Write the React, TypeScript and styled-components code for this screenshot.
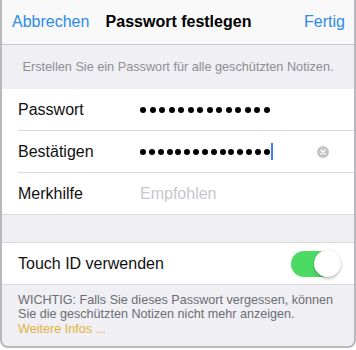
import React from "react";
import styled, { createGlobalStyle } from "styled-components";

const Global = createGlobalStyle`
  html, body { margin: 0; padding: 0; background: #ffffff; }
  body { font-family: "Liberation Sans", Arial, sans-serif; -webkit-font-smoothing: antialiased; }
`;

const Frame = styled.div`
  width: 356px;
  height: 348px;
  box-sizing: border-box;
  border: 2px solid #b9b9bd;
  border-top: none;
  border-radius: 0 0 8px 8px;
  background: #efeff4;
  overflow: hidden;
  display: flex;
  flex-direction: column;
`;

const NavBar = styled.div`
  flex: none;
  height: 44px;
  background: #f9f9f9;
  border-bottom: 1px solid #c8c7cc;
  display: grid;
  grid-template-columns: 1fr auto 1fr;
  align-items: center;
  padding: 0 9px 0 10px;
`;

const NavButton = styled.span<{ $align: "left" | "right" }>`
  color: #2b8be9;
  font-size: 16px;
  text-align: ${(p) => p.$align};
`;

const NavTitle = styled.span`
  color: #000;
  font-size: 16px;
  font-weight: 700;
`;

const SectionHeader = styled.div`
  flex: none;
  height: 44px;
  display: flex;
  align-items: center;
  justify-content: center;
  color: #8e8e93;
  font-size: 12.7px;
  white-space: nowrap;
`;

const Group = styled.div<{ $top?: boolean }>`
  flex: none;
  background: #fff;
  border-bottom: 1px solid #d9d9dd;
  border-top: ${(p) => (p.$top ? "1px solid #d9d9dd" : "none")};
`;

const Row = styled.div`
  display: flex;
  padding-left: 16px;
`;

const RowBody = styled.div<{ $sep?: boolean; $pr?: number }>`
  flex: 1;
  height: 41px;
  display: flex;
  align-items: center;
  border-top: ${(p) => (p.$sep ? "1px solid #d9d9dd" : "none")};
  padding-right: ${(p) => p.$pr ?? 0}px;
`;

const Label = styled.span<{ $w?: number }>`
  width: ${(p) => (p.$w ? `${p.$w}px` : "auto")};
  flex: ${(p) => (p.$w ? "none" : "1")};
  color: #111;
  font-size: 16px;
`;

const Field = styled.div`
  flex: 1;
  display: flex;
  align-items: center;
`;

const Dots = styled.div<{ $gap: number }>`
  display: flex;
  align-items: center;
  gap: ${(p) => p.$gap}px;
`;

const Dot = styled.span`
  width: 6px;
  height: 6px;
  border-radius: 50%;
  background: #000;
`;

const Caret = styled.span`
  width: 2px;
  height: 17px;
  margin-left: 1px;
  background: #3e7ef2;
`;

const Placeholder = styled.span`
  color: #c7c7cd;
  font-size: 16px;
`;

const ClearButton = styled.span`
  width: 12px;
  height: 12px;
  border-radius: 50%;
  background: #c4c4c9;
  display: flex;
  align-items: center;
  justify-content: center;
`;

const Gap = styled.div`
  flex: none;
  height: 27px;
`;

const Toggle = styled.span<{ $on: boolean }>`
  width: 49px;
  height: 26px;
  border-radius: 13px;
  background: ${(p) => (p.$on ? "#4cd964" : "#e5e5ea")};
  display: flex;
  justify-content: ${(p) => (p.$on ? "flex-end" : "flex-start")};
  align-items: center;
`;

const Knob = styled.span`
  width: 27px;
  height: 27px;
  margin-right: -1px;
  border-radius: 50%;
  background: #fff;
  box-shadow: 0 2px 3px rgba(0, 0, 0, 0.22), 0 0 0 0.5px rgba(0, 0, 0, 0.08);
`;

const Footer = styled.div`
  padding: 8px 16px 0;
  color: #6d6d72;
  font-size: 12.6px;
  line-height: 14.4px;
  white-space: nowrap;
`;

const Link = styled.span`
  color: #e2b33a;
`;

const DotRow = ({ count, gap }: { count: number; gap: number }) => (
  <Dots $gap={gap}>
    {Array.from({ length: count }).map((_, i) => (
      <Dot key={i} />
    ))}
  </Dots>
);

export default function App() {
  return (
    <>
      <Global />
      <Frame>
        <NavBar>
          <NavButton $align="left">Abbrechen</NavButton>
          <NavTitle>Passwort festlegen</NavTitle>
          <NavButton $align="right">Fertig</NavButton>
        </NavBar>
        <SectionHeader>Erstellen Sie ein Passwort für alle geschützten Notizen.</SectionHeader>
        <Group>
          <Row>
            <RowBody>
              <Label $w={122}>Passwort</Label>
              <Field>
                <DotRow count={14} gap={3.5} />
              </Field>
            </RowBody>
          </Row>
          <Row>
            <RowBody $sep $pr={25}>
              <Label $w={122}>Bestätigen</Label>
              <Field>
                <DotRow count={15} gap={2.85} />
                <Caret />
              </Field>
              <ClearButton>
                <svg width="6" height="6" viewBox="0 0 6 6">
                  <path d="M1 1L5 5M5 1L1 5" stroke="#fff" strokeWidth="1.4" strokeLinecap="round" />
                </svg>
              </ClearButton>
            </RowBody>
          </Row>
          <Row>
            <RowBody $sep>
              <Label $w={122}>Merkhilfe</Label>
              <Field>
                <Placeholder>Empfohlen</Placeholder>
              </Field>
            </RowBody>
          </Row>
        </Group>
        <Gap />
        <Group $top>
          <Row>
            <RowBody $pr={14}>
              <Label>Touch ID verwenden</Label>
              <Toggle $on>
                <Knob />
              </Toggle>
            </RowBody>
          </Row>
        </Group>
        <Footer>
          WICHTIG: Falls Sie dieses Passwort vergessen, können
          <br />
          Sie die geschützten Notizen nicht mehr anzeigen.
          <br />
          <Link>Weitere Infos ...</Link>
        </Footer>
      </Frame>
    </>
  );
}
